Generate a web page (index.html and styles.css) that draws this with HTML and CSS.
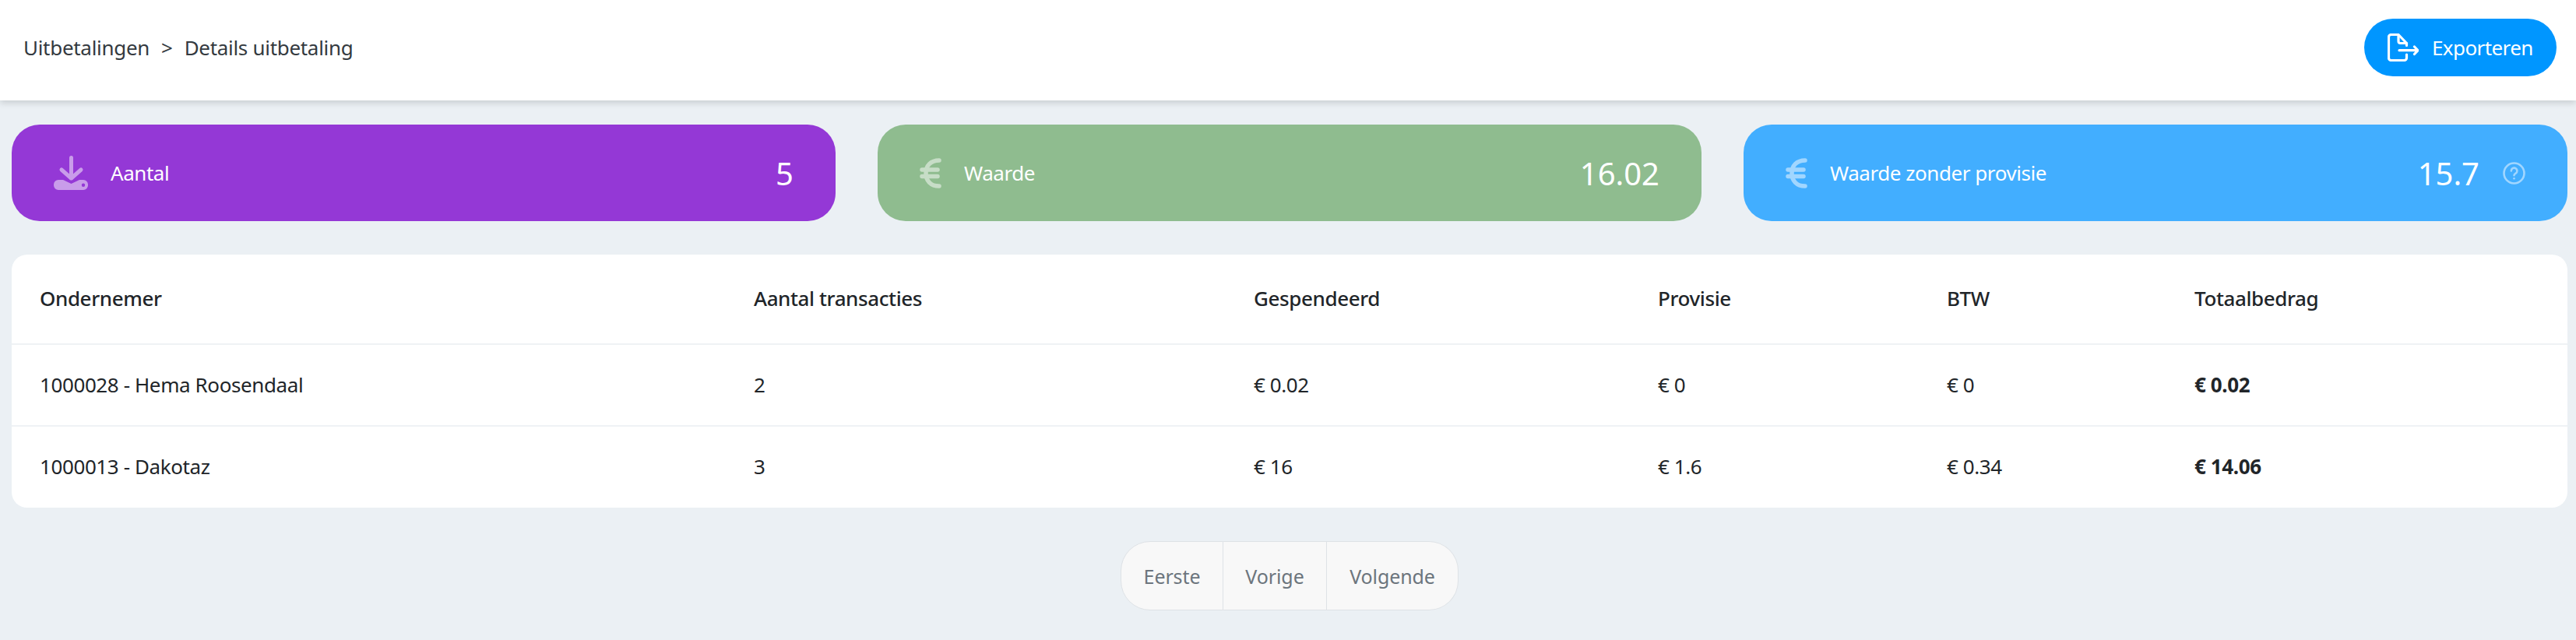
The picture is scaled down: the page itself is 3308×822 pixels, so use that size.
FILE: index.html
```html
<!DOCTYPE html>
<html lang="nl">
<head>
  <meta charset="UTF-8">
  <meta name="viewport" content="width=device-width, initial-scale=1.0">
  <title>Details uitbetaling</title>
  <link rel="stylesheet" href="styles.css">
</head>
<body>
  <header class="topbar">
    <nav class="crumbs">
      <a href="#">Uitbetalingen</a>
      <span class="crumb-sep">&gt;</span>
      <a href="#">Details uitbetaling</a>
    </nav>
    <button class="export-btn">
      <svg class="export-icon" width="40" height="36" viewBox="0 0 40 36" fill="none" stroke="#fff" stroke-width="3.2" stroke-linecap="round" stroke-linejoin="round">
        <path d="M24.500 27v4.500a3 3 0 0 1-3 3H4.500a3 3 0 0 1-3-3V4.500a3 3 0 0 1 3-3H14l10.500 11v3"/>
        <path d="M14 2v8a2.500 2.500 0 0 0 2.500 2.500h8"/>
        <path d="M15 21.700h23.500M34.500 17l4.500 4.700-4.500 4.800"/>
      </svg>
      Exporteren
    </button>
  </header>

  <main class="content">
    <section class="cards">
      <div class="card card-purple">
        <svg class="card-icon" width="44" height="44" viewBox="0 0 44 44">
          <g fill="none" stroke="#fff" stroke-width="5" stroke-linecap="round" stroke-linejoin="round">
            <path d="M22.500 2.500v26"/>
            <path d="M10 18l12.500 11 12.500-11"/>
          </g>
          <path fill="#fff" fill-rule="evenodd" d="M6 31h6l10.500 5L33 31h5a6 6 0 0 1 6 6v1a6 6 0 0 1-6 6H6a6 6 0 0 1-6-6v-1a6 6 0 0 1 6-6zM38 35.500a2.200 2.200 0 1 0 0 4.400 2.200 2.200 0 0 0 0-4.400z"/>
        </svg>
        <span class="card-label">Aantal</span>
        <span class="card-value">5</span>
      </div>
      <div class="card card-green">
        <svg class="card-icon" width="28" height="39" viewBox="0 0 28 39" fill="none" stroke="#fff" stroke-width="5.500" stroke-linecap="round">
          <path d="M25 3C14 3 8 10 8 19.500S14 36 25 36"/>
          <path d="M3 15h20M3 23.500h20"/>
        </svg>
        <span class="card-label">Waarde</span>
        <span class="card-value">16.02</span>
      </div>
      <div class="card card-blue">
        <svg class="card-icon" width="28" height="39" viewBox="0 0 28 39" fill="none" stroke="#fff" stroke-width="5.500" stroke-linecap="round">
          <path d="M25 3C14 3 8 10 8 19.500S14 36 25 36"/>
          <path d="M3 15h20M3 23.500h20"/>
        </svg>
        <span class="card-label">Waarde zonder provisie</span>
        <span class="card-value">15.7</span>
        <svg class="help-icon" width="29" height="29" viewBox="0 0 29 29" fill="none" stroke="#fff" stroke-width="2.600" stroke-linecap="round">
          <circle cx="14.500" cy="14.500" r="13"/>
          <path d="M10.800 11.500a3.800 3.800 0 1 1 5.800 3.200c-1.300.8-2.100 1.400-2.100 2.600"/>
          <path d="M14.500 21.200v.1"/>
        </svg>
      </div>
    </section>

    <section class="table-card">
      <table class="payouts">
        <colgroup>
          <col class="col-name">
          <col class="col-count">
          <col class="col-spent">
          <col class="col-fee">
          <col class="col-vat">
          <col>
        </colgroup>
        <thead>
          <tr>
            <th>Ondernemer</th>
            <th>Aantal transacties</th>
            <th>Gespendeerd</th>
            <th>Provisie</th>
            <th>BTW</th>
            <th>Totaalbedrag</th>
          </tr>
        </thead>
        <tbody>
          <tr>
            <td>1000028 - Hema Roosendaal</td>
            <td>2</td>
            <td>€ 0.02</td>
            <td>€ 0</td>
            <td>€ 0</td>
            <td class="total">€ 0.02</td>
          </tr>
          <tr>
            <td>1000013 - Dakotaz</td>
            <td>3</td>
            <td>€ 16</td>
            <td>€ 1.6</td>
            <td>€ 0.34</td>
            <td class="total">€ 14.06</td>
          </tr>
        </tbody>
      </table>
    </section>

    <div class="pager">
      <button class="pager-btn btn-first">Eerste</button>
      <button class="pager-btn btn-prev">Vorige</button>
      <button class="pager-btn btn-next">Volgende</button>
    </div>
  </main>
</body>
</html>
```

FILE: styles.css
```css
* {
  box-sizing: border-box;
}
html, body {
  height: 100%;
}
body {
  margin: 0;
  background: #ebf0f4;
  color: #343a40;
  font-family: "Noto Sans", Arial, sans-serif;
  font-size: 26px;
  overflow: hidden;
}
.topbar {
  height: 129px;
  background: #fff;
  box-shadow: 0 3px 8px rgba(60, 64, 70, 0.2);
  display: flex;
  align-items: center;
  justify-content: space-between;
  padding: 0 25px 7px 30px;
}
.crumbs {
  display: flex;
  gap: 15px;
  letter-spacing: -0.3px;
}
.crumbs a {
  color: #343a40;
  text-decoration: none;
}
.export-btn {
  width: 247px;
  height: 74px;
  border: none;
  border-radius: 37px;
  background: #0096ff;
  color: #fff;
  font-family: inherit;
  font-size: 26px;
  letter-spacing: -0.6px;
  display: flex;
  align-items: center;
  gap: 17px;
  padding: 0 0 0 30px;
}
.export-icon {
  flex: none;
}
.content {
  padding: 31px 11px 0 15px;
}
.cards {
  display: grid;
  grid-template-columns: repeat(3, 1fr);
  gap: 54px;
}
.card {
  height: 124px;
  border-radius: 36px;
  color: #fff;
  display: flex;
  align-items: center;
  padding: 0 54px;
}
.card-purple {
  background: #9438d6;
}
.card-green {
  background: #8fbc8f;
}
.card-blue {
  background: #42aeff;
}
.card-icon, .help-icon {
  flex: none;
  opacity: 0.5;
}
.card-label {
  margin-left: 29px;
  letter-spacing: -0.45px;
}
.card-value {
  margin-left: auto;
  font-size: 40px;
}
.help-icon {
  margin-left: 30px;
}
.table-card {
  margin-top: 43px;
  background: #fff;
  border-radius: 20px;
  overflow: hidden;
}
.payouts {
  width: 100%;
  table-layout: fixed;
  border-collapse: collapse;
}
.col-name {
  width: 917px;
}
.col-count {
  width: 642px;
}
.col-spent {
  width: 519px;
}
.col-fee {
  width: 371px;
}
.col-vat {
  width: 318px;
}
.payouts th, .payouts td {
  padding: 0 0 2px 36px;
  text-align: left;
  letter-spacing: -0.4px;
  color: #212529;
}
.payouts th {
  height: 115px;
  font-weight: 500;
}
.payouts td {
  height: 105px;
  border-top: 2px solid #eff2f5;
}
.payouts .total {
  font-weight: 700;
}
.pager {
  width: 434px;
  height: 89px;
  margin: 43px auto 0;
  display: flex;
}
.pager-btn {
  background: #f8f8f8;
  border: 1px solid #dee2e6;
  border-left: none;
  color: #6c757d;
  font-family: inherit;
  font-size: 25px;
  letter-spacing: -0.1px;
  padding: 0;
}
.btn-first {
  width: 132px;
  border-left: 1px solid #dee2e6;
  border-radius: 38px 0 0 38px;
}
.btn-prev {
  width: 133px;
}
.btn-next {
  flex: 1;
  border-radius: 0 38px 38px 0;
}
```
